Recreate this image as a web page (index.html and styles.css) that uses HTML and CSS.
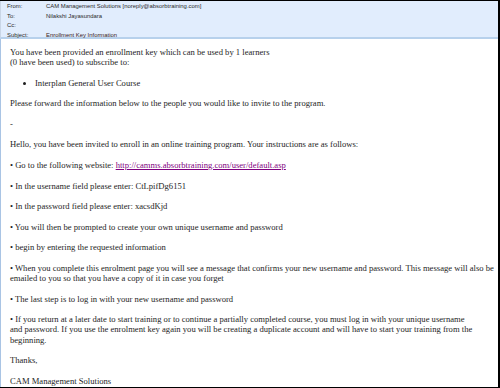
FILE: index.html
```html
<!DOCTYPE html>
<html lang="en">

<head>
    <meta charset="UTF-8">
    <meta name="viewport" content="width=device-width, initial-scale=1.0">
    <title>Enrollment Key Information</title>
    <link rel="stylesheet" href="styles.css">
</head>

<body>
    <div class="mail">
        <div class="mail-head">
            <span class="label">From:</span><span class="value">CAM Management Solutions [noreply@absorbtraining.com]</span>
            <span class="label">To:</span><span class="value">Nilakshi Jayasundara</span>
            <span class="label">Cc:</span><span class="value"></span>
            <span class="label">Subject:</span><span class="value subject">Enrollment Key Information</span>
        </div>

        <div class="mail-body">
            <p>You have been provided an enrollment key which can be used by 1 learners<br>(0 have been used) to subscribe to:</p>
            <ul>
                <li>Interplan General User Course</li>
            </ul>
            <p>Please forward the information below to the people you would like to invite to the program.</p>
            <p>-</p>
            <p>Hello, you have been invited to enroll in an online training program. Your instructions are as follows:</p>
            <p>&bull; Go to the following website: <a href="#">http://camms.absorbtraining.com/user/default.asp</a></p>
            <p>&bull; In the username field please enter: CtLpifDg6151</p>
            <p>&bull; In the password field please enter: xacsdKjd</p>
            <p>&bull; You will then be prompted to create your own unique username and password</p>
            <p>&bull; begin by entering the requested information</p>
            <p>&bull; When you complete this enrolment page you will see a message that confirms your new username and password. This message will also be<br>emailed to you so that you have a copy of it in case you forget</p>
            <p>&bull; The last step is to log in with your new username and password</p>
            <p>&bull; If you return at a later date to start training or to continue a partially completed course, you must log in with your unique username<br>and password. If you use the enrolment key again you will be creating a duplicate account and will have to start your training from the<br>beginning.</p>
            <p>Thanks,</p>
            <p>CAM Management Solutions</p>
        </div>
    </div>
</body>

</html>
```

FILE: styles.css
```css
body {
    margin: 0;
    background-color: #fff;
}

.mail {
    width: 500px;
    height: 388px;
    box-sizing: border-box;
    border-top: 1px solid #000;
    border-right: 2px solid #000;
    border-bottom: 1px solid #000;
    overflow: hidden;
}

.mail-head {
    display: grid;
    grid-template-columns: 39px 1fr;
    grid-auto-rows: 9.5px;
    height: 38px;
    box-sizing: border-box;
    padding: 1px 0 0 6px;
    background-color: #e1edfd;
    border-bottom: 2px solid #b7d1ec;
    border-left: 1px solid #c9d6e6;
    font-family: "Liberation Sans", Arial, sans-serif;
    font-size: 5.9px;
    line-height: 9.5px;
    color: #2a2a2a;
}

.mail-head .subject {
    color: #3a1a22;
}

.mail-body {
    height: 100%;
    padding: 8px 0 0 9px;
    border-left: 1px solid #a9c4e4;
    font-family: "Liberation Serif", "Times New Roman", serif;
    font-size: 8.6px;
    line-height: 10.28px;
    color: #1e1e1e;
    white-space: nowrap;
}

.mail-body p,
.mail-body ul {
    margin: 0 0 10.28px;
}

.mail-body ul {
    padding-left: 25px;
}

.mail-body a {
    color: #800080;
}
```
